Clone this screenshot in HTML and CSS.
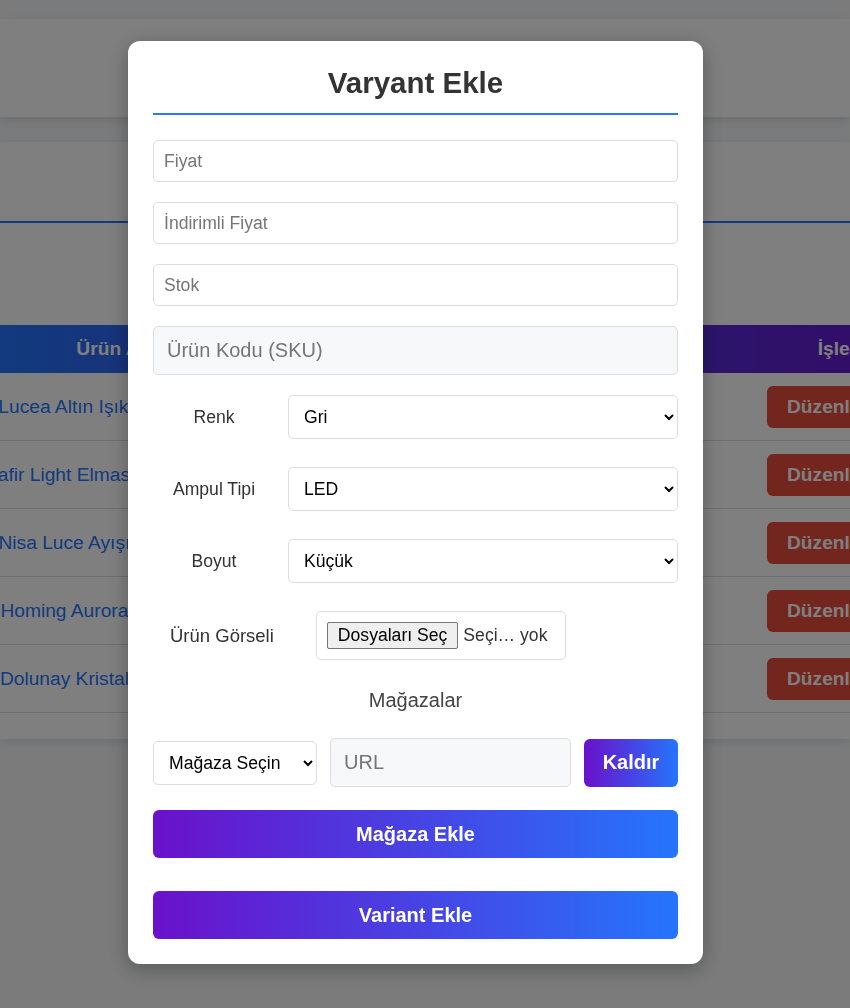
FILE: index.html
```html
<!DOCTYPE html>
<html lang="tr">
<head>
<meta charset="utf-8">
<title>Varyant Ekle</title>
<link rel="stylesheet" href="styles.css">
</head>
<body>
<div class="page">
  <header class="topbar"><span class="brand">Yönetim Paneli</span></header>
  <main class="card">
    <div class="card-head"><h1 class="card-title">Ürünler</h1></div>
    <div class="toolbar"><button class="btn-add">Yeni Ürün Ekle</button></div>
    <div class="table-wrap">
      <div class="table">
        <div class="t-head">
          <div class="cell">Ürün Adı</div>
          <div class="cell">Kategori</div>
          <div class="cell">Fiyat</div>
          <div class="cell">Stok</div>
          <div class="cell">İşlemler</div>
        </div>
        <div class="t-row">
          <div class="cell cell-name">Lucea Altın Işık Sarkıt Avize</div>
          <div class="cell">Avize</div>
          <div class="cell">2.450 ₺</div>
          <div class="cell">12</div>
          <div class="cell cell-actions"><button class="btn-edit">Düzenle</button><button class="btn-del">Sil</button></div>
        </div>
        <div class="t-row">
          <div class="cell cell-name">Safir Light Elmas Kristalli Avize</div>
          <div class="cell">Avize</div>
          <div class="cell">3.100 ₺</div>
          <div class="cell">8</div>
          <div class="cell cell-actions"><button class="btn-edit">Düzenle</button><button class="btn-del">Sil</button></div>
        </div>
        <div class="t-row">
          <div class="cell cell-name">Nisa Luce Ayışığı Led Avize</div>
          <div class="cell">Avize</div>
          <div class="cell">1.890 ₺</div>
          <div class="cell">20</div>
          <div class="cell cell-actions"><button class="btn-edit">Düzenle</button><button class="btn-del">Sil</button></div>
        </div>
        <div class="t-row">
          <div class="cell cell-name">Homing Aurora Siyah Avize</div>
          <div class="cell">Avize</div>
          <div class="cell">2.750 ₺</div>
          <div class="cell">5</div>
          <div class="cell cell-actions"><button class="btn-edit">Düzenle</button><button class="btn-del">Sil</button></div>
        </div>
        <div class="t-row">
          <div class="cell cell-name">Dolunay Kristal Siyah Avize</div>
          <div class="cell">Avize</div>
          <div class="cell">4.200 ₺</div>
          <div class="cell">3</div>
          <div class="cell cell-actions"><button class="btn-edit">Düzenle</button><button class="btn-del">Sil</button></div>
        </div>
      </div>
    </div>
  </main>
</div>

<div class="overlay">
  <div class="modal">
    <h2 class="modal-title">Varyant Ekle</h2>
    <input class="field" type="text" placeholder="Fiyat">
    <input class="field" type="text" placeholder="İndirimli Fiyat">
    <input class="field" type="text" placeholder="Stok">
    <input class="field field-sku" type="text" placeholder="Ürün Kodu (SKU)">

    <div class="form-row">
      <label class="row-label">Renk</label>
      <select class="row-select"><option>Gri</option></select>
    </div>
    <div class="form-row">
      <label class="row-label">Ampul Tipi</label>
      <select class="row-select"><option>LED</option></select>
    </div>
    <div class="form-row">
      <label class="row-label">Boyut</label>
      <select class="row-select"><option>Küçük</option></select>
    </div>
    <div class="file-row">
      <label class="file-label">Ürün Görseli</label>
      <div class="file-box"><span class="file-btn">Dosyaları Seç</span><span class="file-status">Seçi… yok</span></div>
    </div>

    <h3 class="stores-title">Mağazalar</h3>
    <div class="store-row">
      <select class="store-select"><option>Mağaza Seçin</option></select>
      <input class="store-url" type="text" placeholder="URL">
      <button class="btn-grad btn-remove">Kaldır</button>
    </div>
    <button class="btn-grad btn-block btn-store">Mağaza Ekle</button>
    <button class="btn-grad btn-block">Variant Ekle</button>
  </div>
</div>
</body>
</html>
```
FILE: styles.css
```css
* { box-sizing: border-box; }

html, body {
  margin: 0;
  padding: 0;
  height: 100%;
  overflow: hidden;
}

body {
  font-family: "Liberation Sans", Arial, sans-serif;
  background: #f6f7f9;
  color: #333;
}

.page {
  padding-top: 19px;
}

.topbar {
  height: 98px;
  background: #fff;
  box-shadow: 0 3px 10px rgba(0, 0, 0, 0.12);
  display: flex;
  align-items: center;
  justify-content: center;
}

.brand {
  font-size: 24px;
  font-weight: bold;
  color: #333;
}

.card {
  margin-top: 25px;
  background: #fff;
  box-shadow: 0 3px 10px rgba(0, 0, 0, 0.1);
  padding-bottom: 26px;
}

.card-head {
  height: 81px;
  border-bottom: 2px solid #2575fc;
  display: flex;
  align-items: center;
  justify-content: center;
}

.card-title {
  margin: 0;
  font-size: 28px;
  color: #333;
}

.toolbar {
  height: 102px;
  display: flex;
  align-items: center;
  justify-content: center;
}

.btn-add {
  font: bold 18px "Liberation Sans", Arial, sans-serif;
  color: #fff;
  background: #2ecc71;
  border: none;
  border-radius: 6px;
  padding: 12px 24px;
}

.table-wrap {
  overflow: hidden;
  width: 100%;
}

.table {
  width: 951px;
  font-size: 19.2px;
}

.t-head,
.t-row {
  display: grid;
  grid-template-columns: 233px 175px 175px 174px 194px;
  align-items: center;
}

.t-head {
  height: 48px;
  background: linear-gradient(90deg, #2575fc, #6a11cb);
  color: #fff;
  font-weight: bold;
}

.t-row {
  height: 68px;
  border-bottom: 1px solid #dcdcdc;
  background: #fff;
  color: #333;
}

.cell {
  display: flex;
  justify-content: center;
  align-items: center;
  white-space: nowrap;
  min-width: 0;
}

.cell-name {
  color: #2575fc;
}

.cell-actions {
  justify-content: flex-start;
  padding-left: 10px;
  gap: 6px;
}

.btn-edit,
.btn-del {
  font: bold 19.2px "Liberation Sans", Arial, sans-serif;
  color: #fff;
  border: none;
  border-radius: 6px;
  padding: 10px 20px;
  line-height: 22px;
}

.btn-edit { background: #e74c3c; }
.btn-del { background: #c0392b; }

/* overlay + modal */
.overlay {
  position: fixed;
  inset: 0;
  background: rgba(0, 0, 0, 0.5);
  display: flex;
  justify-content: center;
  align-items: flex-start;
  padding-top: 41px;
  padding-right: 19px;
}

.modal {
  width: 575px;
  background: #fff;
  border-radius: 12px;
  padding: 25px;
  box-shadow: 0 5px 20px rgba(0, 0, 0, 0.3);
}

.modal-title {
  margin: 0 0 25px;
  font-size: 29.5px;
  line-height: 33px;
  font-weight: bold;
  color: #333;
  text-align: center;
  padding-bottom: 14px;
  border-bottom: 2px solid #2979f5;
}

.field {
  display: block;
  width: 100%;
  height: 42px;
  margin: 0 0 20px;
  padding: 0 10px;
  border: 1px solid #ddd;
  border-radius: 5px;
  font: 17.6px "Liberation Sans", Arial, sans-serif;
  color: #333;
  background: #fff;
}

.field-sku {
  height: 49px;
  padding: 0 13px;
  font-size: 20px;
  background: #f7f8fa;
}

.field::placeholder,
.store-url::placeholder {
  color: #757575;
}

.form-row {
  display: flex;
  align-items: center;
  gap: 13px;
  margin-bottom: 28px;
}

.row-label {
  width: 122px;
  flex: none;
  text-align: center;
  font-size: 17.6px;
  color: #333;
}

.row-select {
  flex: 1;
  height: 44px;
  padding: 0 11px;
  border: 1px solid #ddd;
  border-radius: 5px;
  background: #fff;
  font: 17.6px "Liberation Sans", Arial, sans-serif;
  color: #000;
}

.file-row {
  display: flex;
  align-items: center;
  gap: 42px;
  padding-left: 17px;
}

.file-label {
  font-size: 18.5px;
  color: #333;
}

.file-box {
  width: 250px;
  height: 49px;
  display: flex;
  align-items: center;
  padding: 0 10px;
  border: 1px solid #ddd;
  border-radius: 5px;
  font-size: 17.6px;
  white-space: nowrap;
}

.file-btn {
  height: 27px;
  line-height: 25px;
  padding: 0 10px;
  background: #efefef;
  border: 1px solid #767676;
  border-radius: 2px;
  color: #000;
}

.file-status {
  margin-left: 5px;
  color: #333;
}

.stores-title {
  margin: 29px 0 26px;
  font-size: 20px;
  line-height: 23px;
  font-weight: normal;
  color: #444;
  text-align: center;
}

.store-row {
  display: flex;
  align-items: center;
  gap: 13px;
  margin-bottom: 23px;
}

.store-select {
  width: 164px;
  flex: none;
  height: 44px;
  padding: 0 11px;
  border: 1px solid #ddd;
  border-radius: 5px;
  background: #fff;
  font: 17.6px "Liberation Sans", Arial, sans-serif;
  color: #000;
}

.store-url {
  flex: 1;
  min-width: 0;
  height: 49px;
  padding: 0 13px;
  border: 1px solid #ddd;
  border-radius: 5px;
  background: #f7f8fa;
  font: 20px "Liberation Sans", Arial, sans-serif;
}

.btn-grad {
  border: none;
  border-radius: 6px;
  background: linear-gradient(90deg, #6a11cb, #2575fc);
  color: #fff;
  font: bold 20px "Liberation Sans", Arial, sans-serif;
  cursor: pointer;
}

.btn-remove {
  width: 94px;
  height: 48px;
  flex: none;
  padding: 0;
}

.btn-block {
  display: block;
  width: 100%;
  height: 48px;
}

.btn-store {
  margin-bottom: 33px;
}
```
